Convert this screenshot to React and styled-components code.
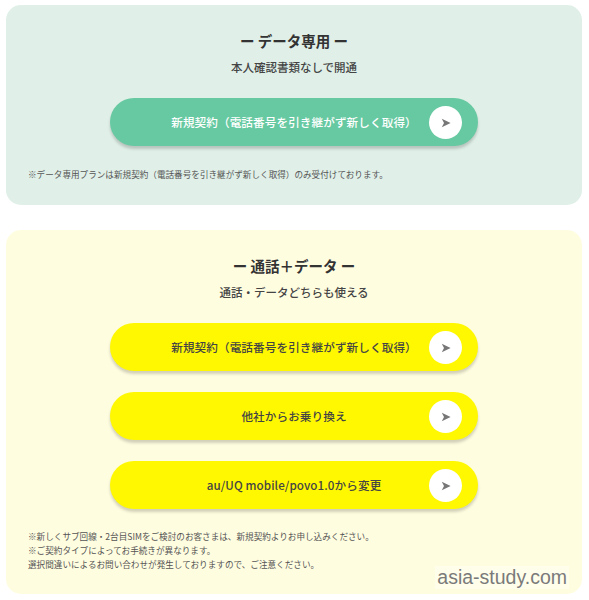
import React from "react";
import styled, { createGlobalStyle } from "styled-components";

const GlobalStyle = createGlobalStyle`
	html, body {
		margin: 0;
		padding: 0;
		background: #fff;
	}
	body {
		font-family: "Noto Sans CJK JP", "Noto Sans", sans-serif;
		color: #333;
	}
`;

const plans = [
	{
		title: "ー データ専用 ー",
		lead: "本人確認書類なしで開通",
		tone: "green",
		buttons: ["新規契約（電話番号を引き継がず新しく取得）"],
		notes: ["※データ専用プランは新規契約（電話番号を引き継がず新しく取得）のみ受付けております。"],
	},
	{
		title: "ー 通話＋データ ー",
		lead: "通話・データどちらも使える",
		tone: "yellow",
		buttons: [
			"新規契約（電話番号を引き継がず新しく取得）",
			"他社からお乗り換え",
			"au/UQ mobile/povo1.0から変更",
		],
		notes: [
			"※新しくサブ回線・2台目SIMをご検討のお客さまは、新規契約よりお申し込みください。",
			"※ご契約タイプによってお手続きが異なります。",
			"選択間違いによるお問い合わせが発生しておりますので、ご注意ください。",
		],
	},
];

const tones = {
	green: { card: "#e0f0e8", button: "#66c9a1", text: "#fff" },
	yellow: { card: "#fffde0", button: "#fff800", text: "#444" },
};

const Arrow = () => (
	<svg width="10" height="10" viewBox="0 0 10 10">
		<path d="M0.8 0.8 L9.6 5 L0.8 9.2 L3 5 Z" fill="#777" />
	</svg>
);

const App = () => {
	return (
		<Page>
			<GlobalStyle />
			{plans.map((plan) => (
				<Card key={plan.title} $tone={plan.tone}>
					<Title>{plan.title}</Title>
					<Lead>{plan.lead}</Lead>
					<ButtonList>
						{plan.buttons.map((label) => (
							<PlanButton key={label} $tone={plan.tone}>
								<span>{label}</span>
								<Circle>
									<Arrow />
								</Circle>
							</PlanButton>
						))}
					</ButtonList>
					<Notes $first={plan.tone === "green"}>
						{plan.notes.map((note) => (
							<p key={note}>{note}</p>
						))}
					</Notes>
				</Card>
			))}
			<Watermark>asia-study.com</Watermark>
		</Page>
	);
};

const Page = styled.div`
	position: relative;
	width: 576px;
	padding: 5px 0 0 6px;
	display: flex;
	flex-direction: column;
	gap: 25px;
`;

const Card = styled.section`
	background: ${({ $tone }) => tones[$tone].card};
	border-radius: 15px;
	padding: 29px 0 0;
	display: flex;
	flex-direction: column;
	align-items: center;
	min-height: ${({ $tone }) => ($tone === "green" ? "200px" : "364px")};
	box-sizing: border-box;
`;

const Title = styled.h2`
	margin: 0;
	font-size: 14.5px;
	line-height: 14px;
	font-weight: 700;
	color: #333;
`;

const Lead = styled.p`
	margin: 12px 0 0;
	font-size: 11.5px;
	line-height: 14px;
	font-weight: 500;
	color: #444;
`;

const ButtonList = styled.div`
	margin-top: 24px;
	display: flex;
	flex-direction: column;
	gap: 21px;
`;

const PlanButton = styled.a`
	position: relative;
	width: 368px;
	height: 48px;
	border-radius: 24px;
	background: ${({ $tone }) => tones[$tone].button};
	color: ${({ $tone }) => tones[$tone].text};
	box-shadow: 0 3px 3px rgba(0, 0, 0, 0.18);
	display: flex;
	align-items: center;
	justify-content: center;
	font-size: 11.6px;
	font-weight: 500;
	letter-spacing: 0.1px;
	cursor: pointer;

	> span {
		margin-left: 0;
	}
`;

const Circle = styled.span`
	position: absolute;
	right: 16px;
	top: 8px;
	width: 33px;
	height: 33px;
	border-radius: 50%;
	background: #fff;
	display: flex;
	align-items: center;
	justify-content: center;
`;

const Notes = styled.div`
	align-self: stretch;
	padding: 0 22px;
	margin-top: ${({ $first }) => ($first ? "21px" : "20px")};

	> p {
		margin: 0;
		font-size: 8.6px;
		line-height: 14px;
		color: #555;
	}
`;

const Watermark = styled.div`
	position: absolute;
	right: 13px;
	top: 566px;
	font-family: "Liberation Sans", Arial, sans-serif;
	font-size: 19.5px;
	color: #7a7a7a;
	background: rgba(255, 255, 255, 0.35);
	padding: 0 2px;
`;

export default App;
